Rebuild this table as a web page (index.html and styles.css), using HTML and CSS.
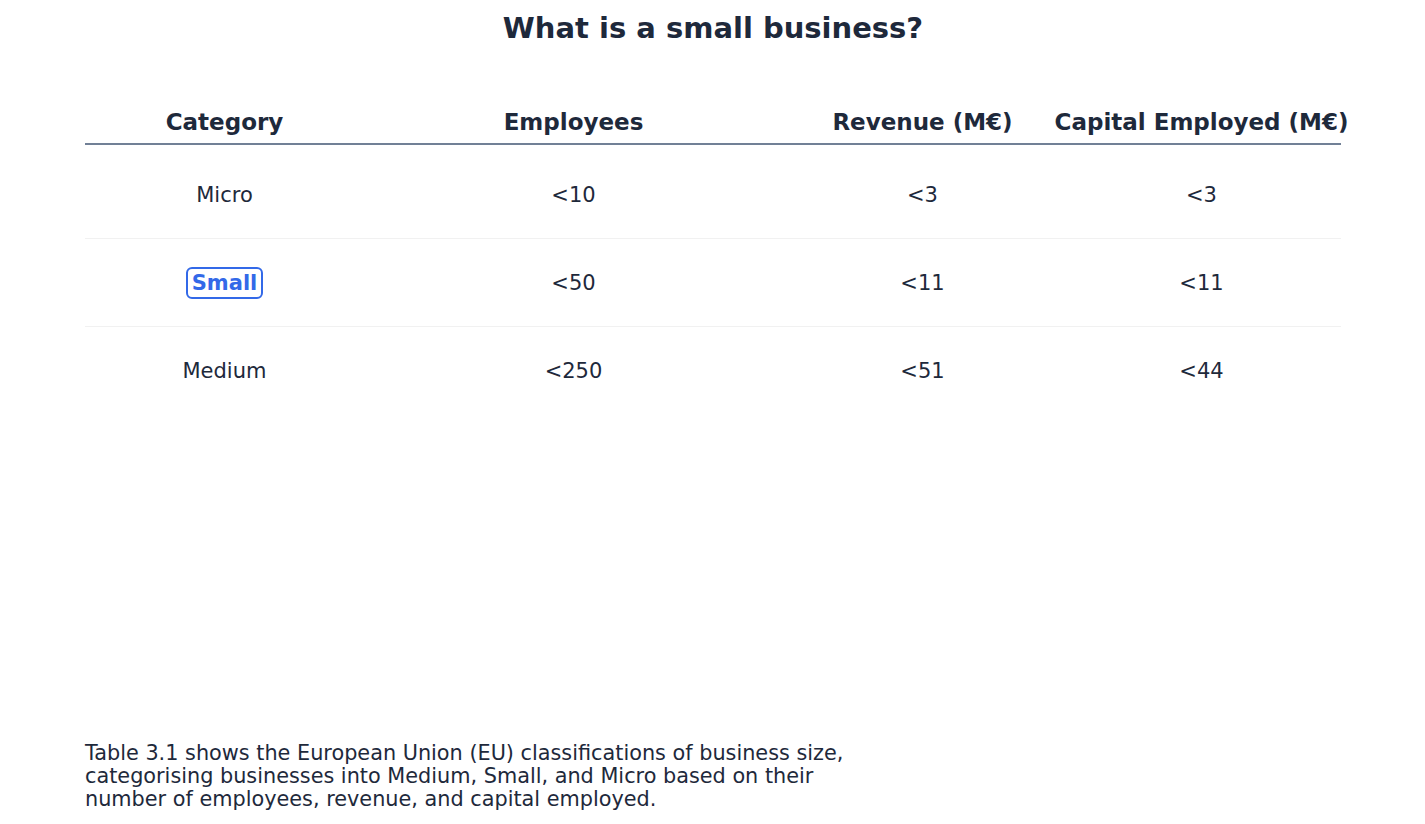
FILE: index.html
```html
<!DOCTYPE html>
<html lang="en">
<head>
<meta charset="utf-8">
<title>What is a small business?</title>
<link rel="stylesheet" href="styles.css">
</head>
<body>
<main class="page">
  <h1 class="title">What is a small business?</h1>
  <div class="table">
    <div class="row head">
      <div class="cell">Category</div>
      <div class="cell">Employees</div>
      <div class="cell">Revenue (M€)</div>
      <div class="cell">Capital Employed (M€)</div>
    </div>
    <div class="row">
      <div class="cell">Micro</div>
      <div class="cell">&lt;10</div>
      <div class="cell">&lt;3</div>
      <div class="cell">&lt;3</div>
    </div>
    <div class="row">
      <div class="cell"><span class="badge">Small</span></div>
      <div class="cell">&lt;50</div>
      <div class="cell">&lt;11</div>
      <div class="cell">&lt;11</div>
    </div>
    <div class="row last">
      <div class="cell">Medium</div>
      <div class="cell">&lt;250</div>
      <div class="cell">&lt;51</div>
      <div class="cell">&lt;44</div>
    </div>
  </div>
  <p class="caption">Table 3.1 shows the European Union (EU) classifications of business size,<br>categorising businesses into Medium, Small, and Micro based on their<br>number of employees, revenue, and capital employed.</p>
</main>
</body>
</html>
```
FILE: styles.css
```css
html, body {
  margin: 0;
  padding: 0;
  background: #ffffff;
}
body {
  font-family: "DejaVu Sans", sans-serif;
  color: #1e293b;
}
.page {
  height: 824px;
  box-sizing: border-box;
  display: flex;
  flex-direction: column;
  padding: 0 84px 13px 85px;
}
.title {
  margin: 0;
  padding-top: 11px;
  font-size: 29px;
  line-height: 34px;
  font-weight: bold;
  text-align: center;
  color: #1e293b;
}
.table {
  margin-top: 56px;
  display: flex;
  flex-direction: column;
}
.row {
  display: grid;
  grid-template-columns: 279fr 419fr 279fr 279fr;
  height: 88px;
  border-bottom: 1px solid #f1f1f1;
  box-sizing: border-box;
}
.row.last {
  border-bottom: none;
}
.row.head {
  height: 44px;
  border-bottom: 2px solid #718096;
  margin-bottom: 6px;
}
.cell {
  display: flex;
  justify-content: center;
  align-items: center;
  white-space: nowrap;
  font-size: 21px;
  color: #1e293b;
  min-width: 0;
}
.head .cell {
  font-weight: bold;
  font-size: 23px;
}
.badge {
  display: inline-block;
  border: 2px solid #3369e8;
  border-radius: 6px;
  padding: 2px 4px;
  line-height: 24px;
  color: #3369e8;
  font-weight: bold;
}
.caption {
  margin: auto 0 0 0;
  font-size: 20.8px;
  line-height: 23px;
  color: #1e293b;
}
```
